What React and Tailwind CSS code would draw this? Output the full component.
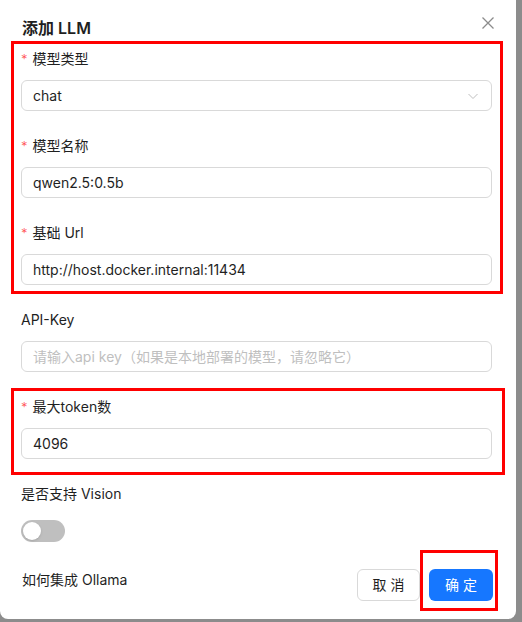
import { useState } from 'react'

const font = { fontFamily: 'Inter, "Noto Sans CJK SC", sans-serif' }

function Label({ required, children }) {
  return (
    <div className="h-[22px] mb-[10px] flex items-center text-sm text-[#1f1f1f]">
      {required && <span className="text-[#ff4d4f] mr-[5px] text-[13px] leading-none font-light">*</span>}
      {children}
    </div>
  )
}

function Field({ label, required, value, placeholder, select }) {
  return (
    <div className="mb-[24px]">
      <Label required={required}>{label}</Label>
      <div className="h-[31px] rounded-md border border-[#d9d9d9] bg-white flex items-center px-[11px] text-sm">
        {value ? (
          <span className="text-[#1f1f1f] flex-1">{value}</span>
        ) : (
          <span className="text-[#bfbfbf] flex-1">{placeholder}</span>
        )}
        {select && (
          <svg width="12" height="12" viewBox="0 0 12 12" className="mr-[1px]">
            <path d="M1.5 4 L6 8.5 L10.5 4" fill="none" stroke="#bfbfbf" strokeWidth="1" />
          </svg>
        )}
      </div>
    </div>
  )
}

// red annotation frame drawn over a group of fields
function Marked({ children, className }) {
  return (
    <div className="relative flow-root">
      {children}
      <div className={`absolute border-[3px] border-[#ff0000] pointer-events-none ${className}`} />
    </div>
  )
}

export default function App() {
  const [vision, setVision] = useState(false)

  return (
    <div className="w-[522px] h-[622px] bg-[#8c8c8c] overflow-hidden" style={font}>
      <div className="w-[516px] h-[619px] bg-white rounded-b-lg pl-[21px] pr-[24px] pt-[17px]">
        <div className="flex items-start justify-between h-[22px]">
          <h2 className="text-base font-semibold text-[#1f1f1f] leading-[22px] pl-[1px]">添加 LLM</h2>
          <svg width="14" height="14" viewBox="0 0 14 14" className="-mt-[1px] -mr-[3px]">
            <path d="M1.5 1.5 L12.5 12.5 M12.5 1.5 L1.5 12.5" stroke="#8c8c8c" strokeWidth="1.3" />
          </svg>
        </div>

        <div className="mt-[9px]">
          <Marked className="-top-[7px] -left-[10px] -right-[11px] bottom-[15px]">
            <Field label="模型类型" required value="chat" select />
            <Field label="模型名称" required value="qwen2.5:0.5b" />
            <Field label="基础 Url" required value="http://host.docker.internal:11434" />
          </Marked>

          <Field label="API-Key" placeholder="请输入api key（如果是本地部署的模型，请忽略它）" />

          <Marked className="-top-[8px] -left-[10px] -right-[13px] bottom-[8px]">
            <Field label="最大token数" required value="4096" />
          </Marked>

          <div className="mb-[23px]">
            <Label>是否支持 Vision</Label>
            <div className="h-[31px] flex items-center">
              <button
                onClick={() => setVision(!vision)}
                className={`w-[44px] h-[22px] rounded-full p-[2px] flex ${vision ? 'bg-[#1677ff] justify-end' : 'bg-[#bfbfbf] justify-start'}`}
              >
                <span className="w-[18px] h-[18px] rounded-full bg-white shadow-sm" />
              </button>
            </div>
          </div>

          <div className="flex items-start justify-between">
            <div className="h-[22px] leading-[22px] text-sm text-[#1f1f1f] pl-[1px]">如何集成 Ollama</div>
            <div className="flex items-center gap-[9px] -mr-[1px]">
              <button className="w-[63px] h-[32px] rounded-md border border-[#d9d9d9] bg-white text-sm text-[#1f1f1f] tracking-[4px] pl-[4px]">
                取消
              </button>
              <div className="relative">
                <button className="w-[64px] h-[32px] rounded-md bg-[#1677ff] text-sm text-white tracking-[4px] pl-[4px]">
                  确定
                </button>
                <div className="absolute -top-[19px] -left-[9px] -right-[5px] -bottom-[10px] border-[3px] border-[#ff0000] pointer-events-none" />
              </div>
            </div>
          </div>
        </div>
      </div>
    </div>
  )
}
